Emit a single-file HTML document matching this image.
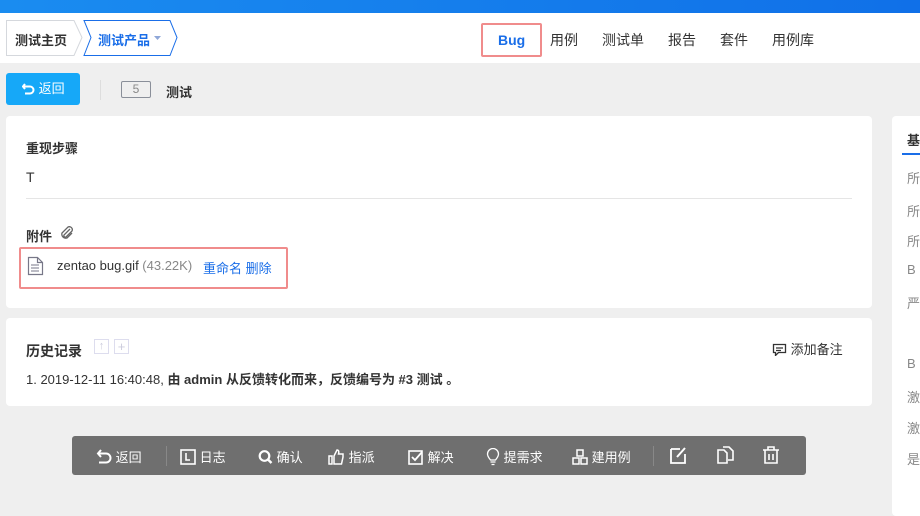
<!DOCTYPE html>
<html><head><meta charset="utf-8"><style>
*{margin:0;padding:0;box-sizing:border-box}
body{width:920px;height:502px;overflow:hidden;background:#efefef;font-family:"Liberation Sans","Noto Sans CJK SC",sans-serif;font-size:13px;color:#333;position:relative}
.abs{position:absolute}
.top{left:0;top:0;width:920px;height:13px;background:linear-gradient(90deg,#1a8cf0,#1070e8)}
.hdr{left:0;top:13px;width:920px;height:50px;background:#fff}
.b{font-weight:bold}
.card{background:#fff;border-radius:4px}
.nav span{position:absolute;top:30px;font-size:14px;color:#333}
.tb{left:72px;top:436px;width:734px;height:39px;background:#6f6f6f;border-radius:3px;color:#fff}
.tb .i{position:absolute;top:11px;font-size:13px;color:#fff}
.tb svg{vertical-align:-3px}
.side{position:absolute;left:907px;font-size:13px;color:#888}
</style></head><body>
<div class="abs top"></div>
<div class="abs hdr"></div>
<svg class="abs" style="left:6px;top:20px" width="172" height="36">
<path d="M0.5 .5H68L76 17.5 68 35.5H0.5Z" fill="#fff" stroke="#d5d8dd"/>
<path d="M78 .5H164L171 17.5 164 35.5H78L85 17.5Z" fill="#fff" stroke="#1a6ee8"/>
<path d="M148 16h7l-3.5 4z" fill="#8fa7d8"/>
</svg>
<div class="abs b" style="left:15px;top:30px;font-size:13px;color:#333">测试主页</div>
<div class="abs b" style="left:98px;top:30px;font-size:13px;color:#1a6ee8">测试产品</div>
<div class="abs" style="left:481px;top:23px;width:61px;height:34px;border:2px solid #f08c8c;border-radius:2px"></div>
<div class="nav">
<span class="b" style="left:498px;top:32px;color:#1a6ee8">Bug</span>
<span style="left:550px">用例</span>
<span style="left:602px">测试单</span>
<span style="left:668px">报告</span>
<span style="left:720px">套件</span>
<span style="left:772px">用例库</span>
</div>
<div class="abs" style="left:6px;top:73px;width:74px;height:32px;background:#16a8f8;border-radius:3px;color:#fff;font-size:13px;line-height:32px;padding-left:16px">
<svg width="13" height="13" viewBox="0 0 13 13" style="vertical-align:-2px"><path d="M3 2 1 4.5 3 7M1 4.5H8a3.5 3.5 0 010 7H3" fill="none" stroke="#fff" stroke-width="2"/></svg> 返回</div>
<div class="abs" style="left:100px;top:80px;width:1px;height:20px;background:#ddd"></div>
<div class="abs" style="left:121px;top:81px;width:30px;height:17px;border:1px solid #8a8f99;border-radius:2px;font-size:12px;color:#888;text-align:center;line-height:15px">5</div>
<div class="abs b" style="left:166px;top:82px;font-size:13px">测试</div>

<div class="abs card" style="left:6px;top:116px;width:866px;height:192px"></div>
<div class="abs b" style="left:26px;top:138px">重现步骤</div>
<div class="abs" style="left:26px;top:169px;font-size:14px">T</div>
<div class="abs" style="left:26px;top:198px;width:826px;height:1px;background:#e5e5e5"></div>
<div class="abs b" style="left:26px;top:226px">附件</div>
<svg class="abs" style="left:59px;top:226px" width="16" height="14"><path d="M11 3 5 9a1.5 1.5 0 002 2l6-6a3 3 0 00-4-4L3 7a4 4 0 005 5l5-5" fill="none" stroke="#666" stroke-width="1.3"/></svg>
<div class="abs" style="left:19px;top:247px;width:269px;height:42px;border:2px solid #f08c8c;border-radius:2px"></div>
<svg class="abs" style="left:27px;top:256px" width="17" height="20"><path d="M1.5 1.5h9l5 5v12h-14z M10.5 1.5v5h5" fill="none" stroke="#778" stroke-width="1.2"/><path d="M4 9h8M4 12h8M4 15h8" stroke="#778"/></svg>
<div class="abs" style="left:57px;top:258px;font-size:13px">zentao bug.gif <span style="color:#888">(43.22K)</span></div>
<div class="abs" style="left:203px;top:258px;color:#1a6ee8">重命名 删除</div>

<div class="abs card" style="left:6px;top:318px;width:866px;height:88px"></div>
<div class="abs b" style="left:26px;top:341px;font-size:14px">历史记录</div>
<div class="abs" style="left:94px;top:339px;width:15px;height:15px;border:1px solid #dde;color:#ccd;font-size:11px;text-align:center;line-height:13px">↑</div>
<div class="abs" style="left:114px;top:339px;width:15px;height:15px;border:1px solid #dde;color:#ccd;font-size:13px;text-align:center;line-height:13px">+</div>
<div class="abs" style="left:772px;top:339px;font-size:13px"><svg width="15" height="13" style="vertical-align:-2px"><path d="M1.5 1.5h12v8h-7l-3 3v-3h-2z M4 5h7M4 7.5h5" fill="none" stroke="#333" stroke-width="1.3"/></svg> 添加备注</div>
<div class="abs" style="left:26px;top:369px;font-size:13px">1. 2019-12-11 16:40:48, <b>由 admin 从反馈转化而来，反馈编号为 #3 测试 。</b></div>

<div class="abs card" style="left:892px;top:116px;width:40px;height:400px"></div>
<div class="abs b" style="left:907px;top:130px">基</div>
<div class="abs" style="left:902px;top:153px;width:20px;height:2px;background:#1a6ee8"></div>
<div class="side" style="top:168px">所</div>
<div class="side" style="top:201px">所</div>
<div class="side" style="top:231px">所</div>
<div class="side" style="top:262px">B</div>
<div class="side" style="top:293px">严</div>
<div class="side" style="top:356px">B</div>
<div class="side" style="top:387px">激</div>
<div class="side" style="top:418px">激</div>
<div class="side" style="top:449px">是</div>

<div class="abs tb">
<span class="i" style="left:24px"><svg width="16" height="16"><path d="M5 1 2 4.5 5 8M2 4.5H10a4.5 4.5 0 010 9H3" fill="none" stroke="#fff" stroke-width="2"/></svg> 返回</span>
<div class="abs" style="left:94px;top:10px;width:1px;height:20px;background:#888"></div>
<span class="i" style="left:108px"><svg width="16" height="16"><rect x="1" y="1" width="14" height="14" fill="none" stroke="#fff" stroke-width="1.6"/><path d="M6 4v7h4" fill="none" stroke="#fff" stroke-width="1.6"/></svg> 日志</span>
<span class="i" style="left:186px"><svg width="15" height="16"><circle cx="6.5" cy="7" r="4.8" fill="none" stroke="#fff" stroke-width="2.2"/><path d="M10 10.5l3.5 3.5" stroke="#fff" stroke-width="2.4"/></svg> 确认</span>
<span class="i" style="left:256px"><svg width="17" height="16"><path d="M1 7h3v8H1zM6 7l3-6c2 0 2 2 1.5 4H15v3l-1.5 7H6z" fill="none" stroke="#fff" stroke-width="1.5"/></svg> 指派</span>
<span class="i" style="left:336px"><svg width="16" height="16"><rect x="1" y="2" width="13" height="13" fill="none" stroke="#fff" stroke-width="1.6"/><path d="M4 8l3 3 7-8" fill="none" stroke="#fff" stroke-width="1.8"/></svg> 解决</span>
<span class="i" style="left:414px"><svg width="14" height="18" style="vertical-align:-4px"><path d="M4.5 12C3 10 1.5 8.5 1.5 6a5.5 5.5 0 0111 0c0 2.5-1.5 4-3 6zM4.5 14h5M5.5 16.5h3" fill="none" stroke="#fff" stroke-width="1.3"/></svg> 提需求</span>
<span class="i" style="left:500px"><svg width="16" height="16"><rect x="5" y="1" width="6" height="6" fill="none" stroke="#fff" stroke-width="1.5"/><rect x="1" y="9" width="6" height="6" fill="none" stroke="#fff" stroke-width="1.5"/><rect x="9" y="9" width="6" height="6" fill="none" stroke="#fff" stroke-width="1.5"/></svg> 建用例</span>
<div class="abs" style="left:581px;top:10px;width:1px;height:20px;background:#888"></div>
<svg class="abs" style="left:598px;top:10px" width="18" height="18"><path d="M1 3h9M1 3v14h14V8" fill="none" stroke="#fff" stroke-width="1.8"/><path d="M7 11l8-9" stroke="#fff" stroke-width="2"/></svg>
<svg class="abs" style="left:645px;top:10px" width="18" height="18"><path d="M1 4h6l3 3v10H1z M6 1h6l4 4v9h-5" fill="none" stroke="#fff" stroke-width="1.6"/></svg>
<svg class="abs" style="left:690px;top:9px" width="18" height="19"><path d="M1 5h16M6 5V2h6v3M3 5v13h12V5M7 9v6M11 9v6" fill="none" stroke="#fff" stroke-width="1.6"/></svg>
</div>
</body></html>
